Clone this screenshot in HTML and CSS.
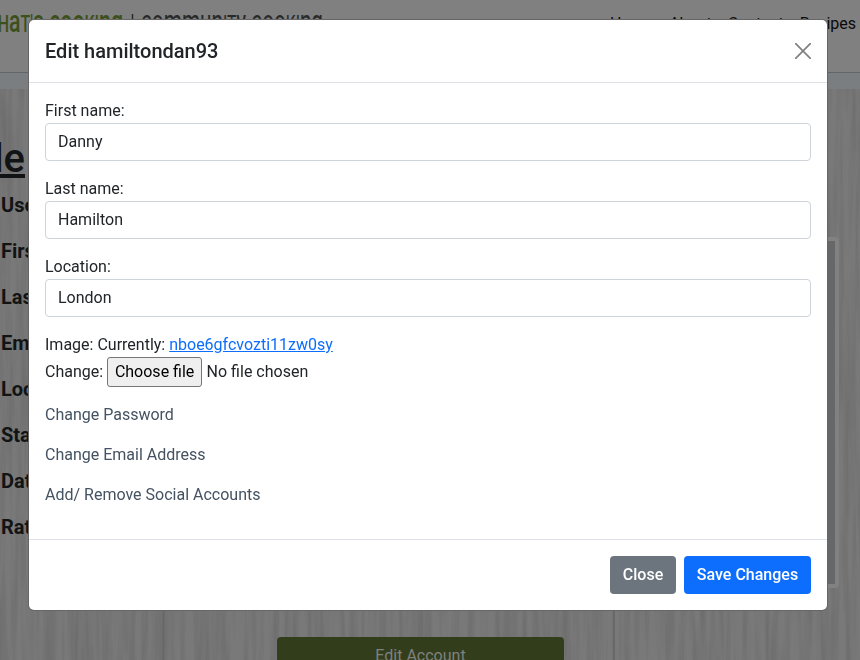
FILE: index.html
```
<!DOCTYPE html>
<html lang="en">
<head>
<meta charset="utf-8">
<title>Edit profile</title>
<link rel="stylesheet" href="styles.css">
</head>
<body>
<div class="page">
  <header class="topbar">
    <svg class="logo" width="330" height="50" viewBox="0 0 330 50">
      <text class="brand" x="-18" y="32" textLength="141" lengthAdjust="spacingAndGlyphs">w<tspan class="cap">H</tspan>a<tspan class="cap">T'</tspan>s coo<tspan class="cap">KI</tspan>ng</text>
      <path class="bar" d="M132.500 14v22"/>
      <text class="tag" x="141" y="32" textLength="182" lengthAdjust="spacingAndGlyphs">commun<tspan class="cap">IT</tspan>y coo<tspan class="cap">KI</tspan>ng</text>
    </svg>
    <nav class="nav"><a>Home</a><a>About</a><a>Contact</a><a>Recipes</a></nav>
  </header>
  <div class="band"></div>
  <main class="profile">
    <svg class="wood" width="860" height="571">
      <filter id="grain" x="0" y="0" width="100%" height="100%" color-interpolation-filters="sRGB">
        <feTurbulence type="fractalNoise" baseFrequency="0.16 0.008" numOctaves="4" seed="8"/>
        <feColorMatrix values="0 0 0 0 0.22  0 0 0 0 0.22  0 0 0 0 0.22  0.36 0 0 0 -0.12"/>
      </filter>
      <rect width="860" height="571" filter="url(#grain)"/>
      <path class="seam" d="M163.500 0v571M614 0v571"/>
    </svg>
    <h1>Profile</h1>
    <div class="columns">
      <ul class="details">
        <li>Username:</li><li>First name:</li><li>Last name:</li><li>Email:</li>
        <li>Location:</li><li>Status:</li><li>Date joined:</li><li>Rating:</li>
      </ul>
      <div class="photo"></div>
    </div>
    <button class="account">Edit Account</button>
  </main>
</div>
<div class="overlay">
  <form class="modal">
    <div class="modal-head">
      <h2>Edit hamiltondan93</h2>
      <svg class="x" width="16" height="16" viewBox="0 0 16 16"><path d="M.7.700 15.300 15.300M15.300.700.700 15.300"/></svg>
    </div>
    <div class="modal-body">
      <div class="field"><label for="first">First name:</label><input id="first" value="Danny"></div>
      <div class="field"><label for="last">Last name:</label><input id="last" value="Hamilton"></div>
      <div class="field"><label for="loc">Location:</label><input id="loc" value="London"></div>
      <div class="current">Image: Currently: <a>nboe6gfcvozti11zw0sy</a></div>
      <div class="file"><span>Change:</span><button type="button">Choose file</button><span>No file chosen</span></div>
      <p>Change Password</p>
      <p>Change Email Address</p>
      <p>Add/ Remove Social Accounts</p>
    </div>
    <div class="modal-foot">
      <button type="button" class="btn grey">Close</button>
      <button type="button" class="btn blue">Save Changes</button>
    </div>
  </form>
</div>
</body>
</html>
```
FILE: styles.css
```
* { box-sizing: border-box; }
body { margin: 0; font: 16px/24px Roboto, sans-serif; color: #212529; overflow: hidden; }
button, input { font: inherit; }
.page { height: 660px; overflow: hidden; background: #808080; }
.topbar { display: flex; justify-content: space-between; height: 72px; }
.logo { font-family: Roboto, sans-serif; font-size: 32px; }
.cap { font-size: 24px; }
.brand { fill: #3c501c; font-weight: 500; }
.tag { fill: #292929; }
.bar { stroke: #292929; stroke-width: 1.5; }
.nav { display: flex; gap: 16px; padding: 12px 4px 0 0; color: #0a0a0a; }
.band { height: 17px; background: #7b7e81; border-top: 1px solid #62666a; }
.profile { position: relative; height: 571px; background: #797979; padding-top: 46px; color: #111315; }
.wood { position: absolute; inset: 0; }
.seam { stroke: #686868; stroke-width: 2; }
h1 { position: relative; width: 225px; margin: 0 0 0 -200px; text-align: right; font-size: 40px; line-height: 48px; font-weight: 500; text-decoration: underline; }
.columns { position: relative; display: flex; justify-content: space-between; height: 409px; }
.details { list-style: none; margin: 0; padding: 9px 0 0 1px; font-size: 20px; line-height: 26px; font-weight: 700; }
.details li { height: 46px; }
.photo { width: 350px; height: 351px; margin: 54px 21px 0 0; border: 4px solid #818181; border-radius: 4px; background: #656768; }
.account { position: relative; display: block; width: 287px; height: 38px; margin: 45px 0 0 277px; border: 0; border-radius: 4px; background: #323e1b; color: #808080; }
.overlay { position: fixed; inset: 0; padding: 20px 33px 0 29px; }
.modal { height: 590px; background: #fff; border-radius: 5px; box-shadow: 0 0 0 1px #666; display: flex; flex-direction: column; }
.modal-head { display: flex; justify-content: space-between; align-items: center; height: 63px; padding: 0 16px; border-bottom: 1px solid #dee2e6; }
h2 { margin: 0; font-size: 20px; line-height: 30px; font-weight: 500; }
.x { fill: none; stroke: #808080; stroke-width: 1.7; stroke-linecap: round; }
.modal-body { flex: 1; padding: 16px 16px 0; }
.field { height: 78px; }
.field label { display: block; }
.field input { display: block; width: 100%; height: 38px; padding: 5px 12px 7px; border: 1px solid #ced4da; border-radius: 4px; color: #212529; background: #fff; }
.current a { color: #0d6efd; text-decoration: underline; }
.file { display: flex; align-items: center; height: 30px; margin-bottom: 16px; }
.file button { width: 95px; height: 30px; margin: 0 4.5px 0 4px; padding: 0; border: 1px solid #767676; border-radius: 3px; background: #efefef; color: #000; }
.modal-body p { margin: 0 0 16px; color: #445261; }
.modal-foot { display: flex; justify-content: flex-end; gap: 8px; height: 71px; padding: 16px; border-top: 1px solid #dee2e6; }
.btn { height: 38px; padding: 0; border: 0; border-radius: 4px; color: #fff; font-weight: 500; }
.grey { width: 66px; background: #6c757d; }
.blue { width: 127px; background: #0d6efd; }
```
